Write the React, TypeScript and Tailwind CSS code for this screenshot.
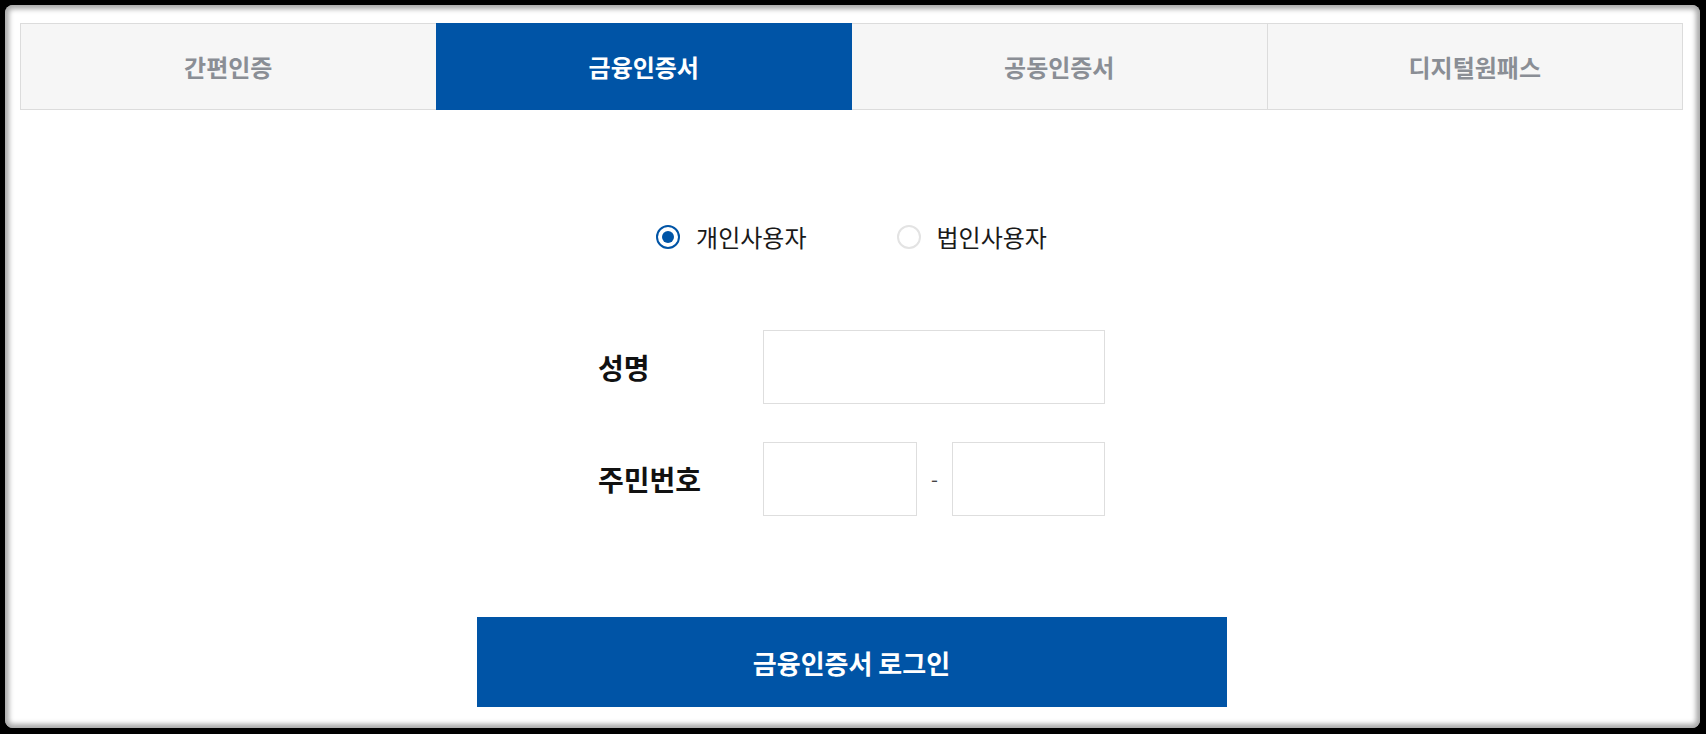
import React, { useState } from 'react';

const tabs = ['간편인증', '금융인증서', '공동인증서', '디지털원패스'];

const font = { fontFamily: '"Noto Sans CJK KR", "Noto Sans", sans-serif' };

function Radio({ checked, label, onClick }: { checked: boolean; label: string; onClick: () => void }) {
    return (
        <button type="button" onClick={onClick} className="flex items-center gap-[16px]">
            <span
                className={`flex h-[24px] w-[24px] items-center justify-center rounded-full border-2 ${
                    checked ? 'border-[#0054a6]' : 'border-[#e3e3e3]'
                }`}
            >
                {checked && <span className="h-[12px] w-[12px] rounded-full bg-[#0054a6]" />}
            </span>
            <span className="text-[24px] leading-[32px] text-[#1a1a1a]">{label}</span>
        </button>
    );
}

export default function App() {
    const [active, setActive] = useState(1);
    const [userType, setUserType] = useState<'personal' | 'corp'>('personal');

    return (
        <div className="h-[734px] w-[1706px] bg-black pt-[5px] pr-[6px] pb-[6px] pl-[5px]" style={font}>
            <div className="flex h-full flex-col rounded-[8px] bg-white pt-[18px] pr-[17px] pl-[15px] shadow-[inset_0_0_5px_4px_rgba(140,140,140,0.75)]">
                {/* tabs */}
                <div className="flex h-[87px]">
                    {tabs.map((t, i) => (
                        <button
                            key={t}
                            type="button"
                            onClick={() => setActive(i)}
                            className={`flex flex-1 items-center justify-center border text-[24px] font-bold ${
                                i > 0 ? '-ml-px' : ''
                            } ${
                                active === i
                                    ? 'relative z-10 border-[#0054a6] bg-[#0054a6] text-white'
                                    : 'border-[#dcdcdc] bg-[#f6f6f6] text-[#8a8e95]'
                            }`}
                        >
                            {t}
                        </button>
                    ))}
                </div>

                {/* user type */}
                <div className="mt-[111px] flex justify-center gap-[90px]">
                    <Radio checked={userType === 'personal'} label="개인사용자" onClick={() => setUserType('personal')} />
                    <Radio checked={userType === 'corp'} label="법인사용자" onClick={() => setUserType('corp')} />
                </div>

                {/* form */}
                <div className="mt-[77px] flex flex-col items-center gap-[38px]">
                    <div className="flex items-center">
                        <label className="w-[165px] text-[28px] font-bold text-[#111]">성명</label>
                        <input className="h-[74px] w-[342px] border border-[#dedede] px-3 text-[20px] outline-none" />
                    </div>
                    <div className="flex items-center">
                        <label className="w-[165px] text-[28px] font-bold text-[#111]">주민번호</label>
                        <input className="h-[74px] w-[154px] border border-[#dedede] px-3 text-[20px] outline-none" />
                        <span className="w-[35px] text-center text-[20px] text-[#444]">-</span>
                        <input
                            type="password"
                            className="h-[74px] w-[153px] border border-[#dedede] px-3 text-[20px] outline-none"
                        />
                    </div>
                </div>

                <div className="mt-[101px] flex justify-center">
                    <button
                        type="button"
                        className="h-[90px] w-[750px] bg-[#0054a6] text-[26px] font-bold text-white"
                    >
                        금융인증서 로그인
                    </button>
                </div>
            </div>
        </div>
    );
}
